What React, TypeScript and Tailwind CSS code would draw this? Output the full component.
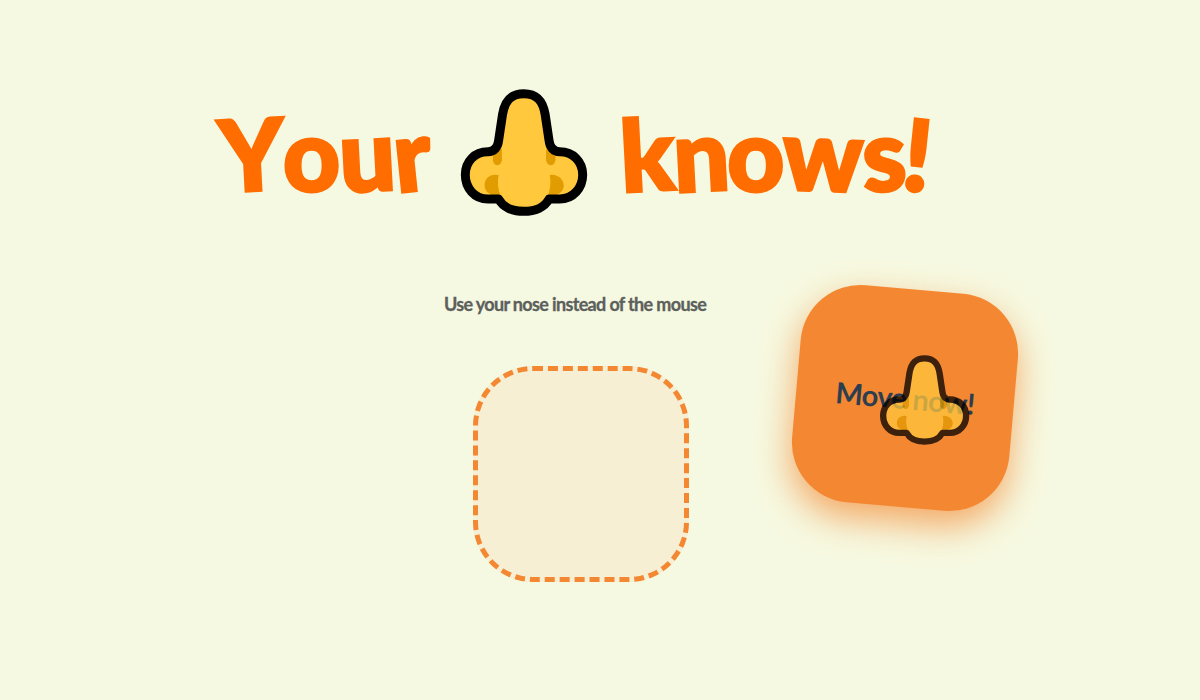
import type { ReactNode } from 'react'

function Nose({ className }: { className: string }) {
  return (
    <svg viewBox="50 45 400 400" className={className}>
      <path
        d="M248 68C205 68 190 95 184 130L172 210C170 228 160 243 140 243C100 243 72 272 72 312C72 352 100 385 140 385H172C185 410 215 422 248 422C281 422 311 410 324 385H356C396 385 425 352 425 312C425 272 396 243 356 243C336 243 326 228 324 210L312 130C306 95 291 68 248 68Z"
        fill="#ffc83d"
      />
      <path d="M155 235h27v30c0 10-6 18-14 18s-13-8-13-18z" fill="#e09c00" />
      <path d="M315 235h28v30c0 10-6 18-14 18s-14-8-14-18z" fill="#e09c00" />
      <path d="M162 312C140 312 130 328 130 344C130 362 145 376 178 376C170 355 168 335 172 313Z" fill="#e09c00" />
      <path d="M332 312C354 312 368 328 368 344C368 362 352 376 320 376C328 355 330 335 326 313Z" fill="#e09c00" />
      <path
        d="M248 68C205 68 190 95 184 130L172 210C170 228 160 243 140 243C100 243 72 272 72 312C72 352 100 385 140 385H172C185 410 215 422 248 422C281 422 311 410 324 385H356C396 385 425 352 425 312C425 272 396 243 356 243C336 243 326 228 324 210L312 130C306 95 291 68 248 68Z"
        fill="none"
        stroke="#000"
        strokeWidth="27"
        strokeLinejoin="round"
      />
    </svg>
  )
}

function Letter({ className, children }: { className: string; children: ReactNode }) {
  return <span className={`inline-block ${className}`}>{children}</span>
}

export default function App() {
  return (
    <div className="relative h-[700px] w-[1200px] overflow-hidden bg-[#f6f9e1]">
      <div className="flex w-[1150px] flex-col items-center pt-[72px]">
        {/* title */}
        <h1 className="flex h-[160px] items-center gap-[29px] font-['Lato',sans-serif] text-[99px] leading-none font-black tracking-[-1.5px] text-[#ff6d00] [-webkit-text-stroke:3px_#ff6d00]">
          <span>
            <Letter className="-rotate-3">Y</Letter>
            <Letter className="rotate-0">o</Letter>
            <Letter className="-rotate-3">u</Letter>
            <Letter className="-rotate-6">r</Letter>
          </span>
          <Nose className="h-[133px] w-[133px] shrink-0" />
          <span>
            <Letter className="-rotate-3">k</Letter>
            <Letter className="-rotate-3">n</Letter>
            <Letter className="rotate-0">o</Letter>
            <Letter className="rotate-2">w</Letter>
            <Letter className="-rotate-3">s</Letter>
            <Letter className="rotate-6">!</Letter>
          </span>
        </h1>

        <p className="mt-[60px] font-['Lato',sans-serif] text-[18px] leading-[24px] font-bold tracking-[-0.65px] text-[#5c605c] [-webkit-text-stroke:0.3px_#5c605c]">
          Use your nose instead of the mouse
        </p>

        {/* drop zone */}
        <div className="mt-[50px] ml-[12px] h-[216px] w-[216px] rounded-[60px] border-[5px] border-dashed border-[#f48731] bg-[#f6efd3]" />
      </div>

      {/* draggable card */}
      <div className="absolute top-[289px] left-[796px] flex h-[218px] w-[218px] rotate-[5deg] items-center justify-center rounded-[60px] bg-[#f48731] shadow-[0_15px_35px_rgba(244,135,49,0.7)]">
        <span className="font-['Lato',sans-serif] text-[29px] font-bold tracking-[-0.6px] text-[#2c3e50]">
          Move now!
        </span>
      </div>

      {/* nose cursor */}
      <Nose className="absolute top-[353px] left-[878px] h-[94px] w-[94px] opacity-75" />
    </div>
  )
}
